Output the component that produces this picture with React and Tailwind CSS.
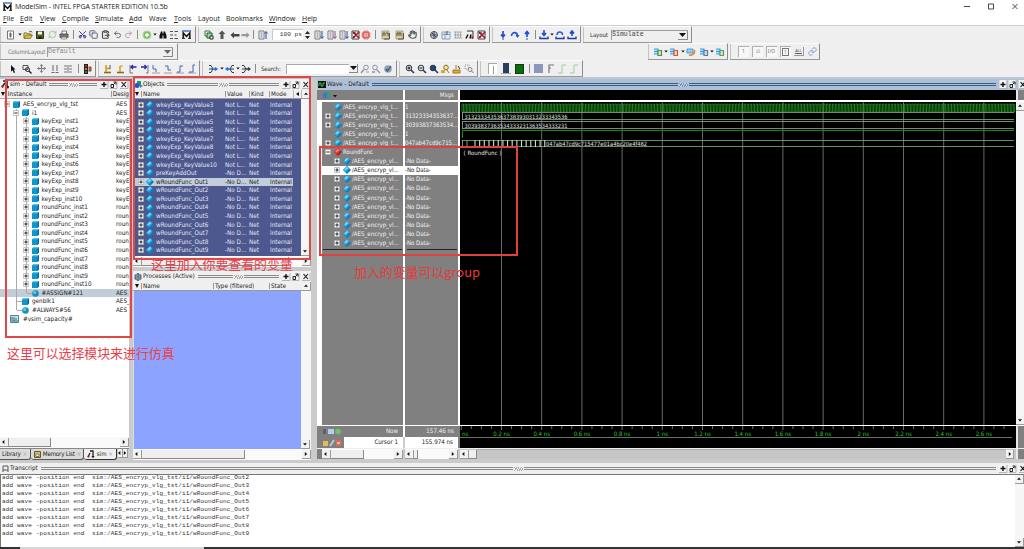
import React from "react";
import {
  Scissors, Copy, ClipboardPaste, Undo2, Redo2, RefreshCw, Hand, Move, Settings, Link,
} from "lucide-react";

const W = {
  3: "w-[3px]", 4: "w-[4px]", 5: "w-[5px]", 6: "w-[6px]", 7: "w-[7px]", 8: "w-[8px]", 9: "w-[9px]", 10: "w-[10px]",
  11: "w-[11px]", 12: "w-[12px]", 13: "w-[13px]", 14: "w-[14px]", 15: "w-[15px]",
};

const UI = "font-['DejaVu_Sans_Condensed','DejaVu_Sans',sans-serif] [font-stretch:condensed]";

const L = (C, cls, sw = 2.6) => <C size={9} strokeWidth={sw} className={cls} />;
const S = (children) => (
  <svg width="10" height="10" viewBox="0 0 10 10" fill="none" strokeWidth="1">{children}</svg>
);
const step = (d, c = "#3a66c0", base = "#555") => S(<><path d="M1 9h8" stroke={base} strokeOpacity=".5" /><path d={d} stroke={c} /></>);
const joint = (c) => S(<><path d="M1 1.5h2l2 3.5l-2 3.5H1M1 5h4" stroke="#2b3d49" /><path d="M5 5h4M7 3.5L9 5L7 6.5" stroke={c} strokeWidth="1.3" /></>);
const layers = (c) => S(<><path d="M1 2h4v5H1M1 4.500h4" stroke="#3f9fdc" fill="#a9dcf5" strokeWidth="1.200" /><path d="M5 3.500h3.500v5H5z" stroke={c} fill="#f0d8c0" strokeWidth="1.200" /></>);
const boxed = (t) => (
  <span className="flex h-[11px] w-[11px] items-center justify-center border-l border-t border-[#b0b0b0] bg-[#f8f8f8] text-[5px] text-[#777]">{t}</span>
);
const lens = (glyph, c = "#333") => S(<><circle cx="4" cy="4" r="2.8" stroke="#333" fill={c === "fill" ? "#164a8a" : "#dce8f5"} /><path d="M6 6l3 3" stroke="#223a66" strokeWidth="1.6" /><path d={glyph} stroke="#111" /></>);

const ICON = {
  sep: <i className="h-[9px] w-px bg-[#8c8c8c]" />,
  caret: <svg width="4" height="3" viewBox="0 0 4 3"><path d="M.3 .5h3.400L2 2.500z" fill="#111" /></svg>,
  new: S(<><path d="M1.5 1h6v8h-6z" stroke="#777" fill="#fff" /><path d="M3 4h3M3 6h3M4.5 2.5v5" stroke="#666" /></>),
  open: S(<><path d="M1 8V3h3l1 1h3v1.5" stroke="#7a6a20" fill="#f1e08a" /><path d="M1 8.5l2-3.5h6.5L7.5 8.5z" fill="#d9b93a" stroke="#6b6330" strokeWidth=".7" /><path d="M6 2l2-1l1 1.500" stroke="#3a7a30" /></>),
  save: S(<><path d="M1.500 1.500h7v7h-7z" fill="#586020" stroke="#2c3510" /><path d="M3 1.500h4v3H3z" fill="#f2f2f2" /><path d="M3.500 6.500h3v2h-3z" fill="#1c1c1c" /></>),
  reload: L(RefreshCw, "text-[#9ccba4]"),
  print: S(<><path d="M3 4V1h4.500v3" stroke="#777" fill="#fff" /><path d="M1 4h8v3.500H1z" fill="#777" stroke="#555" /><path d="M2.500 7h5v2h-5z" fill="#e4e4e4" stroke="#666" strokeWidth=".6" /></>),
  cut: L(Scissors, "rotate-[-90deg] text-[#2b3a9a]"),
  copy: L(Copy, "text-[#55617c]"),
  paste: L(ClipboardPaste, "text-[#4c4a46]", 3),
  undo: L(Undo2, "text-[#6d6d6d]"),
  redo: L(Redo2, "text-[#a9a9a9]"),
  plus: S(<><circle cx="5" cy="5" r="4" fill="#7fc068" stroke="#a8d49a" /><path d="M5 3v4M3 5h4" stroke="#fff" strokeWidth="1.300" /></>),
  find: S(<><path d="M1.500 8.500v-3l1.500-4h1.500v7zM5.500 8.500v-7H7l1.500 4v3z" fill="#111" /><path d="M4 4.500h2" stroke="#111" strokeWidth="2" /></>),
  tree: S(<><path d="M1 1.500h3M1 5h3M1 8.500h3M5.500 1.500h3.500M5.500 5h2M5.500 8.500h3.500" stroke="#4a5560" /></>),
  m: <MLogo />,
  stack: S(<><path d="M1 1h5v5H1z" fill="#fff" stroke="#2e7a3a" /><path d="M3 3h5v5H3z" fill="#9fd89f" stroke="#195f2b" /><path d="M6 6h3v3H6z" fill="#fff" stroke="#222" /></>),
  up: S(<path d="M5 .5l3.500 3.500H6.500v5h-3V4H1.500z" fill="#555" />),
  left: S(<path d="M.5 5L4 2v2h5.500v2.500H4v2z" fill="#444" />),
  right: S(<path d="M9.500 5L6 2v2H.5v2.500H6v2z" fill="#9a9a9a" />),
  runU: S(<><path d="M1 1h5v8H1z" fill="#fff" stroke="#777" /><path d="M2.500 3h2M2.500 5h2M2.500 7h2" stroke="#667" /><path d="M8 9V2M6.500 3.500L8 1.500l1.500 2" stroke="#334b9a" /></>),
  runD: S(<><path d="M1 1h5v8H1z" fill="#fff" stroke="#777" /><path d="M2.500 3h2M2.500 5h2M2.500 7h2" stroke="#667" /><path d="M8 1v7M6.500 6.500L8 8.500l1.500-2" stroke="#334b9a" /></>),
  runP: S(<><path d="M1 1h5v8H1z" fill="#fff" stroke="#777" /><path d="M2.500 3h2M2.500 5h2M2.500 7h2" stroke="#667" /><path d="M8 1v7M6.500 6.500L8 8.500l1.500-2" stroke="#9a4a8a" /></>),
  brk: S(<><path d="M1 1h7v8H1z" fill="#fff" stroke="#444" /><path d="M2 2l6 6M8 2L2 8" stroke="#b01c1c" strokeWidth="1.700" /><path d="M2 3h3M2 7h2" stroke="#223" /></>),
  stop: S(<><path d="M3 1h4l2 2v4L7 9H3L1 7V3z" fill="#e06565" stroke="#e89a9a" /><path d="M3 4h4M3 6h4" stroke="#fff" strokeWidth=".8" /></>),
  perf: S(<><path d="M1 1h7v8H1z" fill="#d7cf9e" stroke="#aaa37c" /><path d="M2 6V3h2v3M5 3h2v3M8.500 3v6H3" stroke="#55543f" /></>),
  mem: S(<><path d="M1 1h7v8H1z" fill="#d7cf9e" stroke="#aaa37c" /><path d="M2 6V3h4v3M4 3v3M8.500 3v6H3" stroke="#55543f" /></>),
  hand: L(Hand, "text-[#5c5c5c]", 3),
  cover: S(<><circle cx="5" cy="5" r="3.500" fill="#c8ccd8" stroke="#555" /><path d="M5 1v8M2 5h6M3 3l4 4" stroke="#3a4266" /></>),
  gridq: S(<><path d="M1 2h8v7H1zM1 4.500h8M4 2v7" stroke="#8aa2bc" fill="#e2ecf5" /><path d="M6 1v4" stroke="#556" /></>),
  grid: S(<><path d="M1 2h8M1 5h8M1 8h8M2.500 2v6M5 2v6M7.500 2v6" stroke="#a5a9b0" /></>),
  probe: S(<><path d="M2 1h6v6" stroke="#333" /><path d="M1 8.500l2-4M5 8.500l1-4" stroke="#111" strokeWidth="1.500" /><circle cx="7.500" cy="7.800" r="1.200" fill="#b02020" /></>),
  blueDown: S(<><path d="M5 1v6M3 4.500L5 7l2-2.500" stroke="#1f4fd0" strokeWidth="1.700" /><path d="M4 9h2" stroke="#1f4fd0" strokeWidth="1.200" /></>),
  blueOver: S(<><path d="M1.500 6c0-4.500 6-4.500 6 0" stroke="#2a5bd6" strokeWidth="1.600" /><path d="M5.500 5h4L7.500 8z" fill="#1f4fd0" /></>),
  blueUp: S(<><path d="M5 7V2M3 4L5 1.500L7 4" stroke="#1f4fd0" strokeWidth="1.700" /><path d="M4 9h2" stroke="#1f4fd0" strokeWidth="1.200" /></>),
  baseDown: S(<><path d="M5 0v5M3 3l2 2.500L7 3" stroke="#1f4fd0" strokeWidth="1.600" /><path d="M1 6.500v2h8v-2" stroke="#1b3fa5" strokeWidth="1.400" /></>),
  baseOver: S(<><path d="M2 5c0-4 5.500-4 5.500 0" stroke="#2a5bd6" strokeWidth="1.500" /><path d="M1 6.500v2h8v-2" stroke="#1b3fa5" strokeWidth="1.400" /></>),
  baseUp: S(<><path d="M5 6V2M3 3.500L5 1L7 3.500" stroke="#1f4fd0" strokeWidth="1.600" /><path d="M1 6.500v2h8v-2" stroke="#1b3fa5" strokeWidth="1.400" /></>),
  lay1: layers("#3d9a4a"), lay2: layers("#d2553a"), lay3: S(<><path d="M1 2h6v4H1z" fill="#9ccbe8" stroke="#4a9bd8" /><path d="M3 8c4 1 6-2 5.500-5" stroke="#d9832f" strokeWidth="1.500" /></>),
  lay4: layers("#4a7cc0"), lay5: layers("#4aa564"),
  b1: boxed("1"), b0: boxed("∅"), bx: boxed("I/O"), bs: boxed(<span className="border border-[#777] px-px leading-[6px]">1</span>),
  ball: <span className="flex h-[9px] w-[10px] items-center justify-center border-b border-r border-[#999] text-[4px] text-[#555] underline">ALL</span>,
  link: L(Link, "text-[#7f9fd0]"),
  pointer: S(<path d="M3 1l4.500 4.500H5.800L7 8.500l-1.200.6L4.600 6.200L3 7.500z" fill="#111" />),
  selz: S(<><path d="M1 1.500h5v4H1z" stroke="#555" /><circle cx="5.500" cy="5.500" r="2" stroke="#222" /><path d="M7 7l2.500 2.500" stroke="#222" strokeWidth="1.400" /></>),
  move: L(Move, "text-[#777]"),
  curs: S(<><path d="M3 1v6M7 1v6M1.500 8.500h3M5.500 8.500h3" stroke="#666" /></>),
  edit: S(<><path d="M1 2h3M1 5h3M1 8h3M6 2h3M6 5h3M6 8h3M5 1v8" stroke="#777" /></>),
  traf: S(<><path d="M1 0h4v10H1z" fill="#222" /><circle cx="3" cy="2" r="1.100" fill="#e03030" /><circle cx="3" cy="5" r="1.100" fill="#d9a020" /><circle cx="3" cy="8" r="1.100" fill="#2fa040" /><path d="M5.500 3h2.500v4H5.500" fill="#c65c5c" stroke="#8a4040" /></>),
  ycur: S(<><path d="M1 8.500h7" stroke="#8a6c10" strokeWidth="1.600" /><path d="M3 8V1M3 4.500h4" stroke="#c8a020" strokeWidth="1.500" /><path d="M7 1v4" stroke="#555" /></>),
  ydel: S(<><path d="M1 8.500h7" stroke="#8a6c10" strokeWidth="1.600" /><path d="M4 8V2" stroke="#c8a020" strokeWidth="1.500" /><path d="M4 2h3" stroke="#c8a020" /></>),
  t1: S(<><path d="M2 1v8h3" stroke="#777" /><path d="M8.500 3H3M5 1L3 3l2 2" stroke="#2525b5" strokeWidth="1.300" /></>),
  t2: S(<><path d="M8 1v8H6" stroke="#777" /><path d="M1 3h5.500M4.500 1l2 2l-2 2" stroke="#2525b5" strokeWidth="1.300" /></>),
  t3: step("M2 1v4h3v3"), t4: step("M2 2h3v4h3"), t5: step("M2 8h3V2h3"), t6: step("M2 8h4V1h2"),
  j1: joint("#1f6fe0"), j2: S(<><path d="M9 1.500H7L5 5l2 3.500h2M9 5H5" stroke="#2b3d49" /><path d="M5 5H1M3 3.500L1 5L3 6.500" stroke="#1f6fe0" strokeWidth="1.300" /></>), j3: joint("#2b4a38"),
  sr1: S(<><circle cx="6" cy="3.500" r="2.300" stroke="#8a94a8" /><path d="M4 5.500L1 9" stroke="#8a94a8" strokeWidth="1.400" /><path d="M6 8h3" stroke="#999" /></>),
  sr2: S(<><circle cx="4" cy="3.500" r="2.300" stroke="#8a94a8" /><path d="M5.500 5.500L9 9M1 8h3" stroke="#8a94a8" strokeWidth="1.300" /></>),
  globe: S(<><circle cx="5" cy="5" r="3.800" fill="#8fa3b8" /><path d="M3 5l1.500 2L8 2" stroke="#3a566e" strokeWidth="1.300" /></>),
  zin: lens("M4 2.500v3M2.500 4h3"), zout: lens("M2.500 4h3"), zfull: lens("", "fill"),
  zc: S(<><circle cx="6" cy="3.500" r="2.300" stroke="#8a7020" fill="#f5e6a0" /><path d="M1 6h4v3H1z" fill="#dba92a" /><path d="M7 6l2 3" stroke="#a07a20" /></>),
  zb: S(<><path d="M1 6h7v3H1zM4 1v4" fill="#dba92a" stroke="#a07a20" /><path d="M6 2l2 3" stroke="#333" /></>),
  zr: S(<><path d="M1 1h4v4H1z" stroke="#999" strokeDasharray="1 1" /><circle cx="6" cy="5.500" r="2" stroke="#888" /><path d="M7.500 7L9.500 9" stroke="#777" /></>),
  w0: <span className="flex h-[11px] w-[9px] items-end justify-center border-l border-t border-[#aaa] bg-white"><i className="h-[8px] w-px bg-[#8aa88a]" /></span>,
  w1: <span className="flex h-[11px] w-[10px] justify-center border-b border-[#aaa]"><i className="h-[10px] w-[6px] bg-[#28405e]" /></span>,
  w2: <span className="h-[10px] w-[9px] border border-[#0b400b] bg-[#0e6a0e]" />,
  w3: <span className="h-[9px] w-[9px] bg-[#8d97b8]" />,
  e1: S(<path d="M3 9V1h5M3 4h2" stroke="#777" strokeWidth="1.200" />),
  e2: S(<path d="M1 9h4V1h4" stroke="#9fcca8" />), e3: S(<path d="M1 9h4V1h4" stroke="#9fcc9f" />),
};

function MLogo() {
  return (
    <svg width="9" height="9" viewBox="0 0 9 9"><path d="M0 1h9" stroke="#2b50b0" strokeWidth="1.200" /><path d="M1.200 8V3L4.500 6.500L7.800 3v5" stroke="#111" strokeWidth="1.500" fill="none" /><path d="M0 8.300h3M6 8.300h3" stroke="#111" strokeWidth="1" /></svg>
  );
}

function Slots({ items }) {
  return items.map(([k, w], i) => (
    <span key={i} className={`flex h-full shrink-0 items-center justify-center ${W[w]}`}>{ICON[k]}</span>
  ));
}
function Bar({ className, children }) {
  return (
    <div className={`mr-[2px] flex h-[17px] shrink-0 items-center border-b border-r border-t border-b-[#9a9a9a] border-r-[#8d8d8d] border-t-[#fdfdfd] bg-[#efefef] shadow-[inset_1px_0_0_#c4c4c4] ${className}`}>{children}</div>
  );
}
function Combo({ className, children, off }) {
  return (
    <div className={`flex h-[10px] items-center justify-between border-l border-t border-[#9d9d9d] bg-[#efefef] ${className}`}>
      <span className={`font-['Liberation_Mono',monospace] text-[6.6px] leading-none ${off ? "text-[#888]" : "text-[#444]"}`}>{children}</span>
      <span className="flex h-[9px] w-[10px] items-center justify-center border-b border-r border-[#888]">
        <svg width="7" height="4" viewBox="0 0 7 4"><path d="M0 0h7L3.500 4z" fill={off ? "#666" : "#111"} /></svg>
      </span>
    </div>
  );
}

function Toolbars() {
  return (
    <div className="flex h-[54px] shrink-0 flex-col border-b-2 border-t border-b-[#bcc7d2] border-t-[#cfcfcf] bg-[#efefef]">
      <div className="flex h-[17px]">
        <Bar className="w-[196px] pl-[5px]">
          <Slots items={[["new", 12], ["caret", 5], ["open", 12], ["save", 12], ["reload", 12], ["print", 12], ["sep", 6], ["cut", 12], ["copy", 11], ["paste", 12], ["undo", 13], ["redo", 9], ["sep", 9], ["plus", 10], ["caret", 6], ["find", 10], ["tree", 12], ["m", 13]]} />
        </Bar>
        <Bar className="w-[223px] pl-[5px]">
          <Slots items={[["stack", 12], ["up", 14], ["left", 12], ["right", 9], ["sep", 6], ["runU", 14]]} />
          <div className="ml-[2px] flex h-[11px] w-[31px] items-center justify-end border-l border-t border-[#c9c9c9] bg-white pr-px font-['Liberation_Mono',monospace] text-[6.2px] text-[#333]">100 ps</div>
          <span className="flex w-[9px] flex-col items-center gap-[2px]">
            <svg width="5" height="8" viewBox="0 0 5 8"><path d="M0 3h5L2.500 0zM0 5h5L2.500 8z" fill="#222" /></svg>
          </span>
          <Slots items={[["runD", 14], ["runP", 11], ["runD", 13], ["brk", 11], ["stop", 10], ["sep", 8], ["perf", 14], ["mem", 14], ["hand", 11]]} />
        </Bar>
        <Bar className="w-[67px] pl-[5px]">
          <Slots items={[["cover", 12], ["gridq", 12], ["grid", 11], ["probe", 13], ["brk", 11]]} />
        </Bar>
        <Bar className="w-[89px] pl-[5px]">
          <Slots items={[["blueDown", 12], ["blueOver", 11], ["blueUp", 13], ["sep", 5], ["baseDown", 12], ["caret", 4], ["baseOver", 12], ["baseUp", 12]]} />
        </Bar>
        <Bar className={`w-[109px] pl-[7px] ${UI}`}>
          <span className="w-[21px] text-[6px] tracking-[-0.1px] text-[#333]">Layout</span>
          <Combo className="w-[77px]">Simulate</Combo>
        </Bar>
      </div>
      <div className="flex h-[17px]">
        <Bar className={`w-[178px] pl-[8px] ${UI}`}>
          <span className="w-[39px] text-[6px] tracking-[-0.15px] text-[#777]">ColumnLayout</span>
          <Combo off className="w-[126px]">Default</Combo>
        </Bar>
        <div className="w-[468px]" />
        <Bar className="w-[80px] pl-[4px]">
          <Slots items={[["lay1", 12], ["caret", 4], ["lay2", 12], ["caret", 5], ["lay3", 12], ["lay4", 13], ["caret", 4], ["lay5", 12]]} />
        </Bar>
        <Bar className="w-[90px] pl-[6px]">
          <Slots items={[["b1", 14], ["b0", 14], ["bx", 14], ["bs", 14], ["ball", 14], ["link", 12]]} />
        </Bar>
      </div>
      <div className="flex h-[17px]">
        <Bar className="w-[96px] pl-[6px]">
          <Slots items={[["pointer", 14], ["selz", 14], ["move", 14], ["curs", 13], ["edit", 14], ["sep", 7], ["traf", 11]]} />
        </Bar>
        <Bar className="w-[102px] pl-[4px]">
          <Slots items={[["ycur", 12], ["ydel", 13], ["t1", 12], ["t2", 11], ["t3", 12], ["t4", 12], ["t5", 12], ["t6", 12]]} />
        </Bar>
        <Bar className="w-[195px] pl-[4px]">
          <Slots items={[["j1", 13], ["caret", 5], ["j2", 12], ["caret", 4], ["j3", 12], ["sep", 6]]} />
          <span className={`ml-[3px] w-[25px] text-[6px] tracking-[-0.1px] text-[#333] ${UI}`}>Search:</span>
          <span className="h-[10px] w-[63px] border-l border-t border-[#aaa] bg-white" />
          <span className="mr-px flex h-[9px] w-[9px] items-center justify-center border-b border-r border-[#888]"><svg width="7" height="4" viewBox="0 0 7 4"><path d="M0 0h7L3.500 4z" fill="#111" /></svg></span>
          <Slots items={[["sr1", 11], ["sr2", 11], ["globe", 14]]} />
        </Bar>
        <Bar className="w-[79px] pl-[5px]">
          <Slots items={[["zin", 12], ["zout", 12], ["zfull", 11], ["zc", 12], ["zb", 12], ["zr", 12]]} />
        </Bar>
        <Bar className="w-[103px] pl-[6px]">
          <Slots items={[["w0", 13], ["w1", 13], ["w2", 15], ["sep", 5], ["w3", 13], ["e1", 11], ["e2", 12], ["e3", 11]]} />
        </Bar>
      </div>
    </div>
  );
}

function HeadButtons() {
  return (
    <svg className="shrink-0" width="29" height="9" viewBox="0 0 29 9" fill="none">
      <path d="M.5 0h7v8.500h-7zM9.500 0h7v8.500h-7zM19.500 0h8v8.500h-8z" fill="#f3f3f3" />
      <path d="M0 8.500h8V1M10 8.500h7V1M20 8.500h8V1" stroke="#b5b5b5" />
      <path d="M4 2v5M1.500 4.500h5" stroke="#111" strokeWidth="1.400" />
      <path d="M11 7.500V4.500h2.500v3zM13.500 2h2.500v2.500M13 5l2.500-2.500" stroke="#222" />
      <path d="M21.500 2l4.500 5M26 2l-4.500 5" stroke="#111" strokeWidth="1.100" />
    </svg>
  );
}
function Head({ icon, title, className, lines = "border-[#8a8a8a]", grip = "bg-[repeating-linear-gradient(120deg,#aaa_0_1px,#eee_1px_2px)]" }) {
  return (
    <div className={`flex shrink-0 items-center ${UI} ${className}`}>
      <span className="flex w-[10px] shrink-0 justify-center">{icon}</span>
      <span className="mr-[3px] shrink-0 text-[6.3px] leading-none text-[#222]">{title}</span>
      <span className={`h-[3px] grow border-y ${lines}`} />
      <span className={`mx-px h-[4px] w-[9px] shrink-0 ${grip}`} />
      <span className={`h-[3px] grow border-y ${lines}`} />
      <span className="w-[3px]" />
      <HeadButtons />
    </div>
  );
}
function Arrow({ dir, className = "" }) {
  const d = { l: "M3 0v5L0 2.500z", r: "M1 0v5l3-2.500z", u: "M0 3.500h5L2.500 .5z", d: "M0 1.500h5L2.500 4.500z" }[dir];
  return (
    <span className={`flex h-[9px] w-[9px] shrink-0 items-center justify-center border-b border-r border-[#9a9a9a] bg-[#f2f2f2] ${className}`}>
      <svg width="4" height="4" viewBox="0 0 5 5"><path d={d} fill="#111" /></svg>
    </span>
  );
}
function HScroll({ className, thumb }) {
  return (
    <div className={`flex shrink-0 items-center bg-[#fafafa] ${className}`}>
      <Arrow dir="l" />
      <span className={`h-[9px] border-b border-r border-[#888] bg-[#efefef] ${thumb}`} />
      <span className="grow" />
      <Arrow dir="r" />
    </div>
  );
}
const Expand = ({ minus }) => (
  <svg className="shrink-0" width="6" height="6" viewBox="0 0 6 6"><path d="M.5 .5h5v5h-5z" fill="#fff" stroke="#aaa" strokeWidth=".7" /><path d={minus ? "M1.300 3h3.400" : "M1.300 3h3.400M3 1.300v3.400"} stroke="#111" strokeWidth=".9" /></svg>
);
const Cube = () => (
  <svg className="shrink-0" width="7" height="7" viewBox="0 0 7 7"><path d="M1.500 0H7v5.500L5.500 7H0V1.500z" fill="#1565a0" /><path d="M0 1.500h5.500V7H0z" fill="#1196c9" /><path d="M1.500 0H7L5.500 1.500H0z" fill="#4cc8ee" /></svg>
);
const Ball = () => (
  <svg className="shrink-0" width="7" height="7" viewBox="0 0 7 7"><circle cx="3.500" cy="3.500" r="3.300" fill="#1790bd" /><circle cx="2.600" cy="2.600" r="1.500" fill="#5cd0ee" /></svg>
);
const Gem = ({ red }) => (
  <svg className="shrink-0" width="8" height="8" viewBox="0 0 8 8"><path d="M4 0l4 4l-4 4L0 4z" fill={red ? "#c01818" : "#1479b8"} /><path d="M4 0l2.500 2.500L3 6L0 4z" fill={red ? "#ee4040" : "#2cb4e8"} /><path d="M4 1L5 2L2.500 4L1.500 3.500z" fill={red ? "#ff9a8a" : "#90e4ff"} /></svg>
);

const TREE = [
  [0, "AES_encryp_vlg_tst", "AES_", "minus"], [1, "i1", "AES_", "minus"],
  ...Array.from({ length: 10 }, (_, i) => [2, `keyExp_inst${i + 1}`, "keyE", "plus"]),
  ...Array.from({ length: 10 }, (_, i) => [2, `roundFunc_inst${i + 1}`, "roun", "plus"]),
  [2, "#ASSIGN#121", "AES_", "ball"], [1, "genblk1", "AES_", "none"], [1, "#ALWAYS#56", "AES_", "ball"], [0, "#vsim_capacity#", "", "cap"],
];
const IND = ["pl-[4px]", "pl-[13px]", "pl-[22.5px]"];

function SimPanel() {
  return (
    <div className="flex w-[129px] shrink-0 flex-col overflow-hidden bg-white">
      <Head className="h-[11px] bg-[#efefef]" title="sim - Default" icon={<svg width="9" height="9" viewBox="0 0 9 9"><path d="M2 1l4 0v5M1 7l3-4" stroke="#222" strokeWidth="1.500" fill="none" /><circle cx="6.500" cy="7" r="1.500" fill="#222" /><circle cx="1.500" cy="6.500" r="1.200" fill="#a22" /></svg>} />
      <div className={`flex h-[9px] shrink-0 items-center border-b border-[#aaa] bg-[#f0f0f0] text-[6.4px] leading-none text-[#222] ${UI}`}>
        <span className="w-[8px] pl-px"><svg width="4" height="4" viewBox="0 0 4 4"><path d="M0 0h4L2 4z" fill="#111" /></svg></span>
        <span className="w-[107px] border-r border-[#999]">Instance</span>
        <span className="pl-px">Desig</span>
      </div>
      <div className={`flex h-[338px] shrink-0 flex-col pt-px text-[6.3px] leading-none text-[#222] ${UI}`}>
        {TREE.map(([lv, name, ds, k], i) => (
          <div key={i} className={`relative flex h-[8.59px] shrink-0 items-center ${IND[lv]} ${i === 22 ? "bg-[#c1cdd8]" : ""}`}>
            {lv > 0 && i < 25 && <i className={`absolute left-[16px] top-0 w-px bg-[#aaa] ${lv === 1 && i === 24 ? "h-[4px]" : "h-full"}`} />}
            {lv === 2 && <i className={`absolute left-[26px] top-0 w-px bg-[#aaa] ${i === 22 ? "h-[4px]" : "h-full"}`} />}
            <span className="relative flex w-[9px] items-center">{k === "minus" || k === "plus" ? <Expand minus={k === "minus"} /> : k === "cap" ? null : <i className="ml-[4px] h-px w-[5px] bg-[#aaa]" />}</span>
            <span className={`relative flex w-[10px] items-center ${k === "cap" ? "ml-[-3px] mr-[3px]" : ""}`}>
              {k === "ball" ? <Ball /> : k === "cap" ? <svg width="9" height="8" viewBox="0 0 9 8"><path d="M.5 .5h8v7h-8z" fill="#cfe4e8" stroke="#4a8a94" /><path d="M2 5V2M4 6V2M6 5V3M1 6h7" stroke="#2d6b78" /></svg> : <Cube />}
            </span>
            <span className="grow whitespace-nowrap">{name}</span>
            <span className="w-[13px] shrink-0 overflow-hidden">{ds}</span>
          </div>
        ))}
      </div>
      <HScroll className="h-[11px]" thumb="w-[42px]" />
      <div className={`flex h-[12px] shrink-0 items-start border-t border-[#888] bg-[#cfcfcf] text-[6.2px] leading-none text-[#222] ${UI}`}>
        <div className="flex h-[11px] w-[31px] items-center justify-between rounded-br-[3px] border-b border-r border-[#555] bg-[#dadada] pl-[2px] pr-[3px] tracking-[-0.1px]">Library<span className="text-[#aaa]">×</span></div>
        <div className="flex h-[11px] w-[53px] items-center justify-between rounded-b-[3px] border-b border-r border-[#555] bg-[#dadada] pl-[3px] pr-[2px] tracking-[-0.2px]">
          <svg width="7" height="7" viewBox="0 0 7 7"><path d="M.5 .5h6v6h-6z" fill="#e0c46a" stroke="#6a5520" /><path d="M2 3h3v2.500H2z" fill="#fff" stroke="#555" strokeWidth=".7" /></svg>Memory List<span className="text-[#aaa]">×</span>
        </div>
        <div className="flex h-[11px] w-[33px] items-center justify-between rounded-b-[3px] border-b border-r border-[#333] bg-[#f0f0f0] pl-[3px] pr-[3px]">
          <svg width="8" height="8" viewBox="0 0 8 8"><path d="M3 1h3v4M1 7l2-4" stroke="#222" strokeWidth="1.300" fill="none" /><circle cx="6" cy="6.500" r="1.300" fill="#222" /><circle cx="1.500" cy="6.500" r="1.100" fill="#a22" /></svg>sim<span className="text-[#aaa]">×</span>
        </div>
        <Arrow dir="l" className="ml-px !w-[5px]" /><Arrow dir="r" className="!w-[5px]" />
      </div>
    </div>
  );
}

const OBJ = [
  ...Array.from({ length: 8 }, (_, i) => [`wkeyExp_KeyValue${i + 3}`, "Not L..."]),
  ["preKeyAddOut", "-No D..."],
  ...Array.from({ length: 9 }, (_, i) => [`wRoundFunc_Out${i + 1}`, "-No D..."]),
];

function ObjectsPanel() {
  return (
    <div className="flex h-[188px] shrink-0 flex-col">
      <Head className="h-[11px] bg-[#efefef]" title="Objects" icon={<svg width="9" height="9" viewBox="0 0 9 9"><path d="M3 1h4v5H3z" fill="#1d9a6a" /><circle cx="3" cy="5.500" r="2.500" fill="#2b50c8" /><path d="M6 4l3 2l-3 2z" fill="#1196c9" /></svg>} />
      <div className={`flex h-[9px] shrink-0 items-center border-b border-[#999] bg-[#f0f0f0] text-[6.3px] leading-none text-[#222] ${UI}`}>
        <span className="w-[8px] pl-[2px]"><svg width="4" height="4" viewBox="0 0 4 4"><path d="M0 0h4L2 4z" fill="#111" /></svg></span>
        <span className="w-[84px] border-l border-[#999] pl-px">Name</span>
        <span className="w-[24px] border-l border-[#999] pl-px">Value</span>
        <span className="w-[20px] border-l border-[#999] pl-px">Kind</span>
        <span className="w-[24px] border-l border-[#999] pl-px">Mode</span>
        <span className="flex h-[8px] w-[9px] items-center justify-center border-x border-[#bbb]"><svg width="3" height="4" viewBox="0 0 3 4"><path d="M3 0v4L0 2z" fill="#111" /></svg></span>
        <Arrow dir="u" />
      </div>
      <div className="flex h-[157px] shrink-0">
        <div className={`flex w-[168px] flex-col border-l border-[#ddd] bg-[#4d588f] pt-[1.500px] text-[6.3px] leading-none text-[#e4e6f2] ${UI}`}>
          {OBJ.map(([n, v], i) => (
            <div key={n} className={`flex h-[8.57px] shrink-0 items-center pl-[4px] ${i === 9 ? "mr-[8px] bg-[#c1cdda] text-[#222]" : ""}`}>
              <Expand />
              <span className="ml-[2px] w-[10px] shrink-0"><Gem /></span>
              <span className="w-[69px] shrink-0 whitespace-nowrap">{n}</span>
              <span className="w-[24px] shrink-0 whitespace-nowrap">{v}</span>
              <span className="w-[21px] shrink-0">Net</span>
              <span>Internal</span>
            </div>
          ))}
        </div>
        <div className="flex w-[10px] flex-col justify-end bg-[#f6f6f6]"><Arrow dir="d" /></div>
      </div>
      <HScroll className="h-[11px]" thumb="w-[147px]" />
    </div>
  );
}

function ProcessesPanel() {
  return (
    <div className="flex grow flex-col">
      <Head className="h-[11px] bg-[#efefef]" title="Processes (Active)" icon={<Settings size={8} strokeWidth={4} className="text-[#4d6a86]" />} />
      <div className={`flex h-[9px] shrink-0 items-center border-b border-[#999] bg-[#f0f0f0] text-[6.3px] leading-none text-[#222] ${UI}`}>
        <span className="w-[8px] pl-[2px]"><svg width="4" height="4" viewBox="0 0 4 4"><path d="M0 0h4L2 4z" fill="#111" /></svg></span>
        <span className="w-[72px] border-l border-[#999] pl-px">Name</span>
        <span className="w-[56px] border-l border-[#999] pl-px">Type (filtered)</span>
        <span className="w-[33px] border-l border-[#999] pl-px">State</span>
        <Arrow dir="u" />
      </div>
      <div className="flex grow">
        <div className="w-[168px] border-l border-[#ddd] bg-[#8ca4ff]" />
        <div className="flex w-[10px] flex-col justify-end bg-[#f6f6f6]"><Arrow dir="d" /></div>
      </div>
      <HScroll className="h-[11px]" thumb="w-[103px]" />
    </div>
  );
}

const WAVES = [
  ["/AES_encryp_vlg_t...", "1", 0], ["/AES_encryp_vlg_t...", "31323334353637...", 1], ["/AES_encryp_vlg_t...", "30393837363534...", 1],
  ["/AES_encryp_vlg_t...", "1", 0], ["/AES_encryp_vlg_t...", "047ab47cd9c715...", 1], ["RoundFunc", "", 2],
  ...Array.from({ length: 10 }, () => ["/AES_encryp_vl...", "-No Data-", 3]),
];
const GRID = Array.from({ length: 13 }, (_, i) => 41.500 + i * 40.200);
const CLOCK = "M2 10v-8" + Array.from({ length: 188 }, () => "h1.470v8h1.470v-8").join("");
const TRANS = Array.from({ length: 16 }, (_, i) => 15 + i * 4.650);

function WaveCanvas() {
  return (
    <svg width="556" height="323" viewBox="0 0 556 323" fill="none" className="shrink-0 bg-black font-['DejaVu_Sans_Condensed','DejaVu_Sans',sans-serif] text-[5.900px]">
      {GRID.map((x) => <path key={x} d={`M${x} 0V323`} stroke="#686868" />)}
      <path d={CLOCK} stroke="#27a827" strokeWidth=".75" />
      <path d="M2 10.500H554M2 17.500H554M2 19.500H554M2 26.500H554" stroke="#7f9c7f" strokeWidth=".9" />
      <path d="M2.500 36V28.500H554" stroke="#188a18" />
      <path d="M2 38.500H554M2 44.500H554" stroke="#6fa06f" strokeWidth=".9" />
      <path d="M2.500 10.500v7M2.500 19.500v7M2.500 38.500v6M7 38.500v6" stroke="#a5b8a5" strokeWidth=".8" />
      {TRANS.map((x) => <path key={x} d={`M${x} 38v7`} stroke="#cfe0cf" strokeWidth="1.100" />)}
      <g fill="#e2e2e2">
        <text x="4.500" y="16.500" textLength="103" lengthAdjust="spacingAndGlyphs">31323334353637383930313233343536</text>
        <text x="4.500" y="25.500" textLength="103" lengthAdjust="spacingAndGlyphs">30393837363534333231363534333231</text>
        <text x="86" y="43.500" textLength="101" lengthAdjust="spacingAndGlyphs">047ab47cd9c715477e01a4bc20e4f482</text>
        <text x="3.500" y="53" textLength="38" lengthAdjust="spacingAndGlyphs">( RoundFunc )</text>
      </g>
    </svg>
  );
}
function Ruler() {
  const labels = ["0.2 ns", "0.4 ns", "0.6 ns", "0.8 ns", "1 ns", "1.2 ns", "1.4 ns", "1.6 ns", "1.8 ns", "2 ns", "2.2 ns", "2.4 ns", "2.6 ns"];
  return (
    <svg width="556" height="21" viewBox="0 0 556 21" className="bg-black font-['DejaVu_Sans_Condensed','DejaVu_Sans',sans-serif] text-[6px]">
      {Array.from({ length: 55 }, (_, i) => 1.300 + i * 10.050).map((x, i) => <path key={i} d={`M${x} 0v${i % 4 === 0 ? 4 : 3}`} stroke="#9a9a9a" strokeWidth=".7" />)}
      <text x="2" y="9.500" fill="#2cc52c">ns</text>
      {labels.map((t, i) => <text key={t} x={GRID[i]} y="9.500" textAnchor="middle" fill="#2cc52c">{t}</text>)}
      <path d="M0 11.500H552" stroke="#8a8a8a" strokeWidth=".8" />
    </svg>
  );
}

function WavePanel() {
  return (
    <div className="flex w-[707px] shrink-0 flex-col overflow-hidden">
      <Head className="h-[11px] w-[711px] bg-[#adc0d8]" lines="border-[#345f80]" grip="bg-[repeating-linear-gradient(120deg,#6d8fb0_0_1px,#c5d5e6_1px_2px)]" title="Wave - Default" icon={<svg width="8" height="7" viewBox="0 0 8 7"><path d="M0 0h8v7H0z" fill="#111" /><path d="M1 5V2h2v3h2V2h2" stroke="#3c3" fill="none" /></svg>} />
      <div className={`flex h-[10px] shrink-0 text-[6.2px] leading-none text-[#eee] ${UI}`}>
        <div className="flex w-[86px] items-center bg-[#808080] pl-[5px]">
          <svg width="15" height="9" viewBox="0 0 15 9"><circle cx="4.500" cy="4.500" r="3.600" fill="#2a7bd0" /><path d="M4.500 1a3.500 3.500 0 0 1 0 7z" fill="#29a86a" /><circle cx="3.500" cy="5.500" r="1.600" fill="#9a4bd0" /><path d="M11 4h4l-2 2.500z" fill="#111" /></svg>
        </div>
        <div className="flex w-[57px] items-center justify-end border-l-2 border-r-2 border-white bg-[#808080] pr-[4px]">Msgs</div>
        <div className="w-[556px] bg-black" />
        <div className="w-[2px] bg-[#e8e8e8]" /><div className="grow bg-[#808080]" />
      </div>
      <div className="flex h-[325px] shrink-0 border-t-2 border-white">
        <div className={`flex w-[143px] flex-col border-l-[5px] border-r-2 border-white bg-[linear-gradient(to_right,#808080_81px,#fff_81px,#fff_83px,#808080_83px)] text-[6.1px] leading-none text-[#f2f2f2] ${UI}`}>
          {WAVES.map(([n, v, k], i) => (
            <div key={i} className={`flex h-[9.120px] shrink-0 items-center pl-[3px] ${i === 7 ? "bg-white text-[#222]" : ""}`}>
              <span className={`flex shrink-0 justify-end ${k === 3 ? "w-[15px]" : "w-[6px]"}`}>{k ? <Expand minus={k === 2} /> : null}</span>
              <span className="ml-[3px] w-[9px] shrink-0"><Gem red={k === 2} /></span>
              <span className={`shrink-0 whitespace-nowrap ${k === 3 ? "w-[53px]" : "w-[62px]"}`}>{n}</span>
              <span className="whitespace-nowrap tracking-[-0.05px]">{v}</span>
            </div>
          ))}
          <div className="ml-px mt-px flex h-px shrink-0"><i className="h-px w-[79px] bg-[#222]" /><i className="ml-[5px] h-px w-[50px] bg-[#222]" /></div>
        </div>
        <WaveCanvas />
        <div className="w-[2px] bg-[#e8e8e8]" />
        <div className="flex grow flex-col justify-between bg-[#f6f6f6]"><Arrow dir="u" /><Arrow dir="d" /></div>
      </div>
      <div className="flex h-[23px] shrink-0 border-t border-white">
        <div className={`flex w-[143px] flex-col bg-[#808080] text-[6.2px] leading-none text-[#eee] ${UI}`}>
          <div className="flex h-[11px] items-center">
            <svg className="ml-[5px]" width="20" height="7" viewBox="0 0 20 7"><path d="M1 1h3v5H1z" fill="#5a6170" /><path d="M6 1h6v5H6z" fill="#b5cdf0" /><circle cx="16" cy="3.500" r="2.800" fill="#73bf6a" /></svg>
            <span className="w-[56px] text-right">Now</span>
            <span className="ml-[5px] h-full w-[2px] bg-white" />
            <span className="w-[49px] text-right">157.46 ns</span>
          </div>
          <div className="flex h-[11px] items-center">
            <svg className="ml-[5px]" width="20" height="8" viewBox="0 0 20 8"><path d="M1 2h5v5H1z" fill="#e8bc4a" /><path d="M8 7l4-6" stroke="#c0c6d8" strokeWidth="2" /><path d="M14 1h5v6h-5z" fill="#e06a5a" /><path d="M15 4h3" stroke="#fff" /></svg>
            <span className="ml-[2px] flex h-full w-[54px] items-center justify-end bg-white text-[#222]">Cursor 1</span>
            <span className="h-full w-[7px] border-r-2 border-[#ccc] bg-white" />
            <span className="flex h-full w-[53px] items-center justify-end bg-white pr-[5px] text-[#222]">155.974 ns</span>
          </div>
        </div>
        <div className="w-[556px] bg-black"><Ruler /></div>
        <div className="w-[2px] bg-[#e8e8e8]" /><div className="grow bg-[#808080]" />
      </div>
      <div className="flex h-[11px] shrink-0 items-center border-t border-[#eee] bg-[#c6c6c6]">
        <span className="h-full w-[5px] bg-[#808080]" />
        <HScroll className="h-full w-[81px]" thumb="w-[33px]" />
        <HScroll className="ml-[2px] h-full w-[53px]" thumb="w-[4px]" />
        <Arrow dir="l" className="ml-[2px]" /><span className="h-[9px] w-[8px] border-b border-r border-[#888] bg-[#efefef]" />
        <span className="grow self-start border-t border-[#aaa]" />
        <Arrow dir="r" className="mr-[2px] !w-[8px]" />
        <span className="w-[2px] self-stretch bg-[#e8e8e8]" /><span className="w-[6px] self-stretch bg-[#808080]" />
      </div>
    </div>
  );
}

const MENUS = [["F", "ile", "w-[17px]"], ["E", "dit", "w-[20px]"], ["V", "iew", "w-[22px]"], ["C", "ompile", "w-[33px]"], ["S", "imulate", "w-[34px]"], ["A", "dd", "w-[20px]"], ["", "Wave", "w-[25px]"], ["T", "ools", "w-[24px]"], ["", "Layout", "w-[28px]"], ["", "Bookmarks", "w-[43px]"], ["W", "indow", "w-[33px]"], ["H", "elp", "w-[20px]"]];

export default function App() {
  return (
    <div className="relative flex h-[549px] w-[1024px] flex-col overflow-hidden bg-[#cbcbcb]">
      <div className="flex h-[13px] shrink-0 items-center justify-between bg-white pl-[3px] font-['Open_Sans','Noto_Sans',sans-serif] text-[7px] leading-none text-[#222]">
        <div className="flex items-center gap-[3px]"><MLogo /><span className="tracking-[-0.07px]">ModelSim - INTEL FPGA STARTER EDITION 10.5b</span></div>
        <svg className="mr-[5px]" width="56" height="7" viewBox="0 0 56 7" fill="none" stroke="#333" strokeWidth=".9"><path d="M1 3.500h6M25.500 1h5v5h-5zM49.500 1l5 5M54.500 1l-5 5" /></svg>
      </div>
      <div className="flex h-[12px] shrink-0 items-center bg-white pb-px pl-[3px] font-['Open_Sans','Noto_Sans',sans-serif] text-[7px] leading-none text-[#222]">
        {MENUS.map(([a, b, w]) => <span key={b} className={w}><u className="decoration-[0.5px] underline-offset-1">{a}</u>{b}</span>)}
      </div>
      <Toolbars />
      <div className="flex h-[381px] shrink-0">
        <SimPanel />
        <div className="w-[4px]" />
        <div className="flex w-[178px] shrink-0 flex-col gap-[4px]">
          <ObjectsPanel />
          <ProcessesPanel />
        </div>
        <div className="w-[6px]" />
        <WavePanel />
      </div>
      <div className="mt-[3px] flex h-[84px] shrink-0 flex-col bg-[#efefef]">
        <Head className="h-[11px] w-[1028px]" title="Transcript" icon={<svg width="7" height="8" viewBox="0 0 7 8"><path d="M1 7V1h5v6M1 5h5" stroke="#555" fill="none" /></svg>} />
        <div className="flex h-[73px] border-t border-[#777]">
          <div className="flex w-[1017px] flex-col overflow-hidden border-l border-[#777] bg-white pl-px font-['Liberation_Mono',monospace] text-[6.080px] leading-[8.050px] tracking-[0.1px] text-[#333]">
            {[2, 3, 4, 5, 6, 7, 8, 9].map((n) => (
              <div key={n} className="mb-px mt-[-1px] h-[8.050px] shrink-0 whitespace-pre">{`add wave -position end  sim:/AES_encryp_vlg_tst/i1/wRoundFunc_Out${n}`}</div>
            ))}
          </div>
          <div className="flex grow flex-col justify-between bg-[#f6f6f6]"><Arrow dir="u" /><Arrow dir="d" /></div>
        </div>
      </div>
      <div className="flex h-[2px] shrink-0 bg-[#333]"><span className="ml-[20px] w-[184px] bg-[#d8d8d8]" /></div>

      <div className="absolute left-[5px] top-[79px] h-[259px] w-[127px] border-2 border-[#e04848]" />
      <div className="absolute left-[133px] top-[76px] h-[184px] w-[178px] border-2 border-[#e04848]" />
      <div className="absolute left-[319px] top-[146px] h-[110px] w-[199px] border-2 border-[#e04040]" />
      <div className="absolute left-[7px] top-[344px] whitespace-nowrap font-['Noto_Sans_CJK_SC',sans-serif] text-[12.900px] leading-[18px] text-[#e8404a]">这里可以选择模块来进行仿真</div>
      <div className="absolute left-[151px] top-[257px] whitespace-nowrap font-['Noto_Sans_CJK_SC',sans-serif] text-[12.900px] leading-[14px] text-[#e8404a]">这里加入你要查看的变量</div>
      <div className="absolute left-[354px] top-[263px] whitespace-nowrap font-['Noto_Sans_CJK_SC',sans-serif] text-[12.900px] leading-[18px] text-[#e83838]">加入的变量可以group</div>
    </div>
  );
}
